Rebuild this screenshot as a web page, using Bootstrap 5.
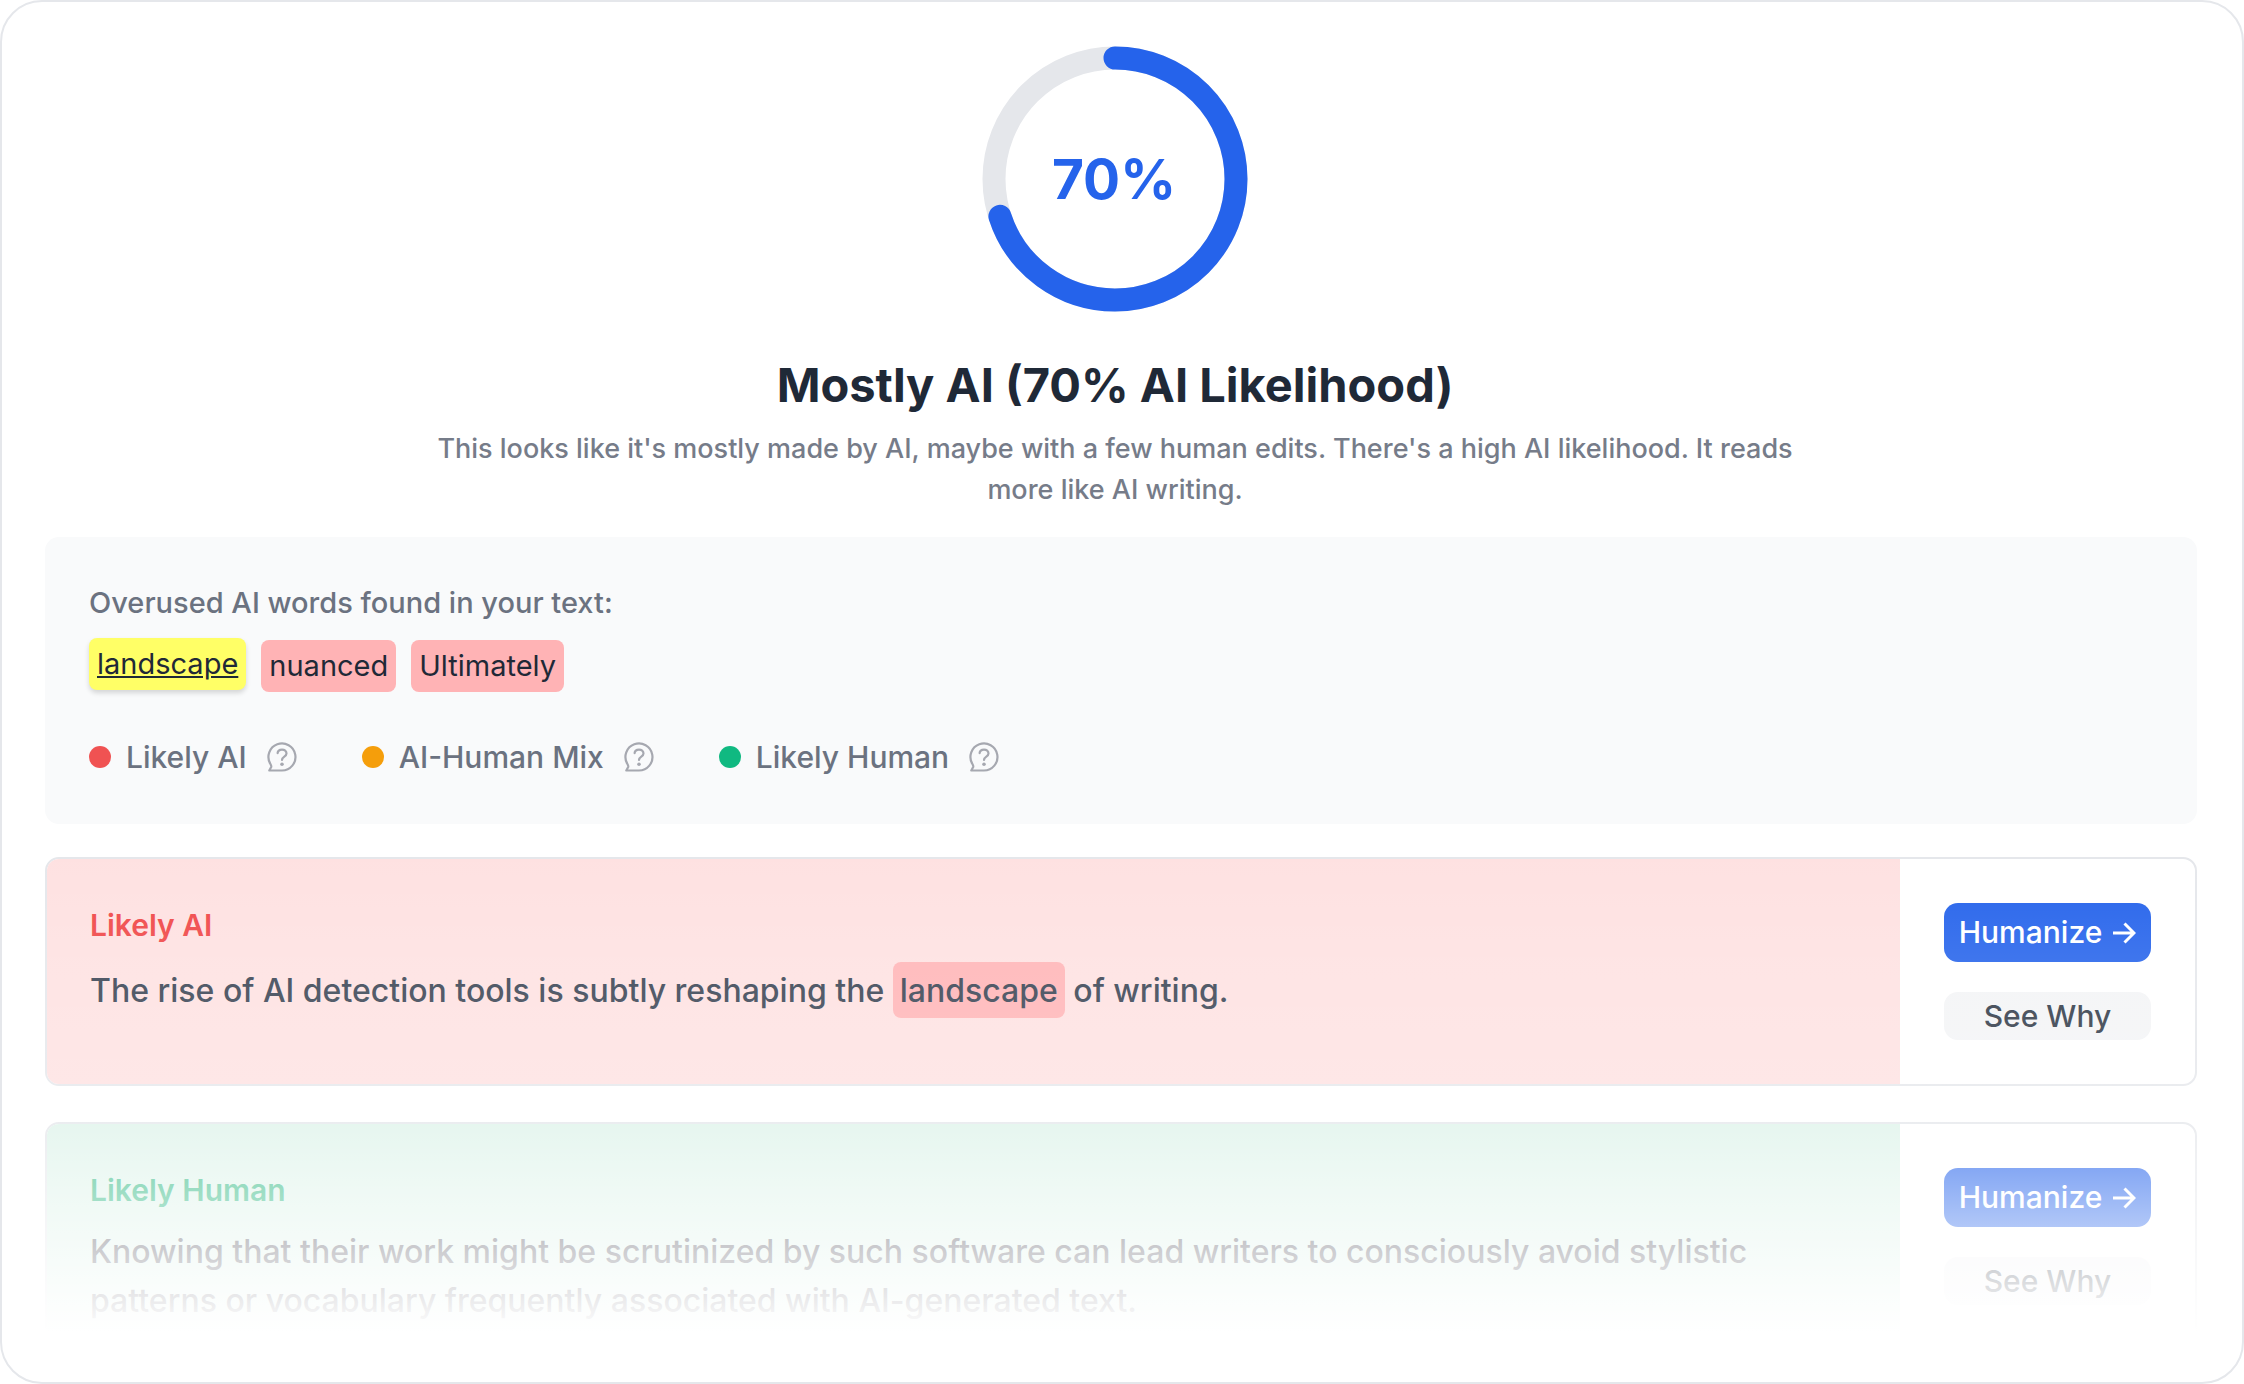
<!DOCTYPE html>
<html lang="en">
<head>
<meta charset="utf-8">
<meta name="viewport" content="width=device-width, initial-scale=1">
<title>AI Detection Result</title>
<link href="https://cdn.jsdelivr.net/npm/bootstrap@5.3.0/dist/css/bootstrap.min.css" rel="stylesheet">
<style>
  body { font-family: Inter, "Liberation Sans", sans-serif; color: #1f2937; background: #fff; font-size: 30px; }
  .result-shell { min-height: 100vh; border: 2px solid #e5e7eb; border-radius: 42px; padding: 44px 45px 8px 43px; }
  .result-head { padding-right: 12px; }
  .gauge { width: 266px; height: 266px; }
  .gauge text { font-size: 55px; font-weight: 700; fill: #2563eb; }
  .verdict { font-size: 47px; line-height: 56px; font-weight: 700; margin: 45px 0 15px; }
  .verdict-note { font-size: 27px; line-height: 41px; font-weight: 500; color: #767c89; max-width: 1374px; margin-bottom: 27px; }
  .words-panel { background: #f9fafb; border-radius: 14px; padding: 44px; color: #6b7280; margin-bottom: 33px; }
  .words-title { font-size: 29px; line-height: 44px; font-weight: 500; margin-bottom: 15px; }
  .word-list { gap: 15px; }
  .word-chip { display: inline-block; background: #ffb3b5; color: #1f2937; font-size: 29px; border-radius: 8px; padding: 0 8px; line-height: 52px; text-decoration: none; }
  .word-chip.is-hovered { background: #ffff66; text-decoration: underline; transform: translateY(-2px); box-shadow: 0 3px 5px rgba(0,0,0,.15); }
  .legend-row { margin-top: 42px; gap: 65px; line-height: 46px; font-weight: 500; }
  .legend-dot { width: 22px; height: 22px; border-radius: 50%; margin-right: 15px; }
  .dot-ai { background: #f05252; }
  .dot-mix { background: #f59e0b; }
  .dot-human { background: #10b981; }
  .hint-btn { margin-left: 20px; line-height: 0; color: #a6a8b0; }
  .hint-btn svg { width: 30px; height: 30px; }
  .sentence-list { position: relative; gap: 36px; }
  /* white veil that fades the end of the preview out */
  .sentence-list::after { content: ""; position: absolute; inset: 0; pointer-events: none;
    background: linear-gradient(to bottom, rgba(255,255,255,.01) 0, rgba(255,255,255,.06) 46px, rgba(255,255,255,.12) 105px, rgba(255,255,255,.2) 228px, rgba(255,255,255,.24) 265px, rgba(255,255,255,.44) 311px, rgba(255,255,255,.64) 369px, rgba(255,255,255,.88) 440px, #fff 476px); }
  .sentence { border: 2px solid #e5e7eb; border-radius: 14px; overflow: hidden; }
  .sentence-main { padding: 44px 44px 44px 43px; }
  .tone-ai { background: #fee1e1; }
  .tone-human { background: #def3ea; }
  .sentence-side { width: 295px; padding: 44px; gap: 30px; }
  .sentence-label { font-size: 30px; line-height: 44px; font-weight: 600; margin-bottom: 15px; }
  .tone-ai .sentence-label { color: #f04747; }
  .tone-human .sentence-label { color: #33b984; }
  .sentence-text { font-size: 32px; line-height: 49px; font-weight: 500; color: #374151; margin: 0; }
  .tone-human .sentence-text { color: #4b4b57; }
  .flagged { display: inline-block; background: #ffb4b6; border-radius: 8px; padding: 4px 7px 3px; }
  .act-btn { border: 0; border-radius: 14px; font-size: 30px; font-weight: 500; padding: 0; }
  .act-primary, .act-primary:hover { background: #2563eb; color: #fff; line-height: 59px; }
  .act-plain, .act-plain:hover { background: #f3f4f6; color: #2c3644; line-height: 48px; }
  .act-primary svg { width: 24px; height: 24px; margin-left: 10px; }
</style>
</head>
<body>
<main class="result-shell">
  <header class="result-head text-center">
    <svg class="gauge d-block mx-auto" viewBox="0 0 266 266" role="img" aria-label="70% AI likelihood">
      <circle cx="133" cy="133" r="121" fill="none" stroke="#e5e7eb" stroke-width="23"/>
      <circle cx="133" cy="133" r="121" fill="none" stroke="#2563eb" stroke-width="23" stroke-linecap="round" pathLength="100" stroke-dasharray="70 30" transform="rotate(-90 133 133)"/>
      <text x="132" y="153" text-anchor="middle">70%</text>
    </svg>
    <h1 class="verdict">Mostly AI (70% AI Likelihood)</h1>
    <p class="verdict-note mx-auto">This looks like it's mostly made by AI, maybe with a few human edits. There's a high AI likelihood. It reads more like AI writing.</p>
  </header>

  <section class="words-panel">
    <h2 class="words-title">Overused AI words found in your text:</h2>
    <div class="word-list d-flex flex-wrap">
      <a class="word-chip is-hovered" href="#landscape">landscape</a>
      <a class="word-chip" href="#nuanced">nuanced</a>
      <a class="word-chip" href="#ultimately">Ultimately</a>
    </div>
    <div class="legend-row d-flex flex-wrap">
      <div class="d-flex align-items-center"><span class="legend-dot dot-ai"></span>Likely AI<button class="hint-btn btn p-0 border-0" type="button" aria-label="About Likely AI"><svg viewBox="0 0 30 30"><use href="#hint"/></svg></button></div>
      <div class="d-flex align-items-center"><span class="legend-dot dot-mix"></span>AI-Human Mix<button class="hint-btn btn p-0 border-0" type="button" aria-label="About AI-Human Mix"><svg viewBox="0 0 30 30"><use href="#hint"/></svg></button></div>
      <div class="d-flex align-items-center"><span class="legend-dot dot-human"></span>Likely Human<button class="hint-btn btn p-0 border-0" type="button" aria-label="About Likely Human"><svg viewBox="0 0 30 30"><use href="#hint"/></svg></button></div>
    </div>
  </section>

  <section class="sentence-list d-flex flex-column">
    <article class="sentence d-flex">
      <div class="sentence-main tone-ai flex-grow-1">
        <h3 class="sentence-label">Likely AI</h3>
        <p class="sentence-text">The rise of AI detection tools is subtly reshaping the <span class="flagged" id="landscape">landscape</span> of writing.</p>
      </div>
      <div class="sentence-side d-flex flex-column flex-shrink-0">
        <button class="act-btn act-primary btn d-flex align-items-center justify-content-center" type="button">Humanize<svg viewBox="0 0 24 24" fill="none" stroke="currentColor" stroke-width="3"><path d="M1 12h21M12.500 2.500l9.500 9.500-9.500 9.500"/></svg></button>
        <button class="act-btn act-plain btn" type="button">See Why</button>
      </div>
    </article>
    <article class="sentence d-flex">
      <div class="sentence-main tone-human flex-grow-1">
        <h3 class="sentence-label">Likely Human</h3>
        <p class="sentence-text">Knowing that their work might be scrutinized by such software can lead writers to consciously avoid stylistic patterns or vocabulary frequently associated with AI-generated text.</p>
      </div>
      <div class="sentence-side d-flex flex-column flex-shrink-0">
        <button class="act-btn act-primary btn d-flex align-items-center justify-content-center" type="button">Humanize<svg viewBox="0 0 24 24" fill="none" stroke="currentColor" stroke-width="3"><path d="M1 12h21M12.500 2.500l9.500 9.500-9.500 9.500"/></svg></button>
        <button class="act-btn act-plain btn" type="button">See Why</button>
      </div>
    </article>
  </section>
</main>

<svg class="d-none" aria-hidden="true">
  <symbol id="hint" viewBox="0 0 30 30">
    <g fill="none" stroke="currentColor" stroke-width="2.200" stroke-linecap="round" stroke-linejoin="round">
      <path d="M15 28.500A13.500 13.500 0 1 0 3.300 21.800C4.200 23.400 4.600 23.900 4.200 25L2.300 28.500Z"/>
      <path d="M10.600 11.200C10.800 8.900 12.700 7.600 15 7.600C17.500 7.600 19.500 9.200 19.500 11.600C19.500 14.700 15 14.600 15 18"/>
    </g>
    <circle cx="15" cy="22.300" r="1.800" fill="currentColor"/>
  </symbol>
</svg>
<script src="https://cdn.jsdelivr.net/npm/bootstrap@5.3.0/dist/js/bootstrap.bundle.min.js"></script>
</body>
</html>
